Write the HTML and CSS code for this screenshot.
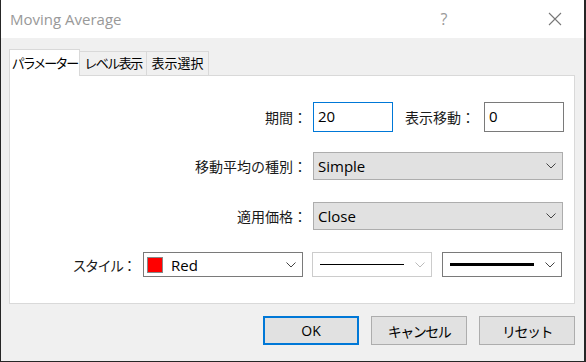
FILE: index.html
```html
<!DOCTYPE html>
<html lang="ja">
<head>
  <meta charset="UTF-8">
  <title>Moving Average</title>
  <link rel="stylesheet" href="styles.css">
</head>
<body>
  <div class="window">
    <div class="titlebar">
      <span class="title">Moving Average</span>
      <span class="help">?</span>
      <svg class="close" width="14" height="14" viewBox="0 0 14 14"><path d="M1 1 L13 13 M13 1 L1 13" stroke="#777" stroke-width="1.1" fill="none"/></svg>
    </div>
    <div class="dialog">
      <div class="tabs">
        <div class="tab active">パラメーター</div>
        <div class="tab">レベル表示</div>
        <div class="tab">表示選択</div>
      </div>
      <div class="panel">
        <div class="row row-period">
          <label class="lbl">期間：</label>
          <div class="input focus">20</div>
          <label class="lbl-shift">表示移動：</label>
          <div class="input">0</div>
        </div>
        <div class="row">
          <label class="lbl">移動平均の種別：</label>
          <div class="combo">
            <span>Simple</span>
            <svg class="chev" width="10" height="6" viewBox="0 0 10 6"><polyline points="0.5,0.5 5,5 9.5,0.5" stroke="#444" fill="none"/></svg>
          </div>
        </div>
        <div class="row">
          <label class="lbl">適用価格：</label>
          <div class="combo">
            <span>Close</span>
            <svg class="chev" width="10" height="6" viewBox="0 0 10 6"><polyline points="0.5,0.5 5,5 9.5,0.5" stroke="#444" fill="none"/></svg>
          </div>
        </div>
        <div class="row row-style">
          <label class="lbl lbl-style">スタイル：</label>
          <div class="drop color-drop">
            <span class="swatch"></span>
            <span>Red</span>
            <svg class="chev" width="10" height="6" viewBox="0 0 10 6"><polyline points="0.5,0.5 5,5 9.5,0.5" stroke="#444" fill="none"/></svg>
          </div>
          <div class="drop line-drop disabled">
            <span class="line thin"></span>
            <svg class="chev" width="10" height="6" viewBox="0 0 10 6"><polyline points="0.5,0.5 5,5 9.5,0.5" stroke="#bbb" fill="none"/></svg>
          </div>
          <div class="drop line-drop">
            <span class="line thick"></span>
            <svg class="chev" width="10" height="6" viewBox="0 0 10 6"><polyline points="0.5,0.5 5,5 9.5,0.5" stroke="#444" fill="none"/></svg>
          </div>
        </div>
      </div>
      <div class="buttons">
        <button class="btn default">OK</button>
        <button class="btn kana">キャンセル</button>
        <button class="btn kana">リセット</button>
      </div>
    </div>
  </div>
</body>
</html>
```

FILE: styles.css
```css
body { margin: 0; background: #262626; font-family: "Open Sans", "Noto Sans CJK JP", sans-serif; font-size: 14px; color: #000; }
.window { width: 583px; height: 361px; margin-left: 1px; background: #f0f0f0; display: flex; flex-direction: column; }

.titlebar { height: 38px; background: #fff; display: flex; align-items: center; padding-left: 9px; }
.title { color: #999; font-size: 15px; flex: 1; }
.help { color: #999; font-size: 16px; width: 20px; text-align: center; margin-right: 94px; }
.close { margin-right: 22px; }

.dialog { flex: 1; padding: 11px 9px 0 8px; }
.tabs { display: flex; align-items: flex-end; height: 26px; }
.tab {
  height: 24px; line-height: 23px; padding: 0; box-sizing: border-box; text-align: center;
  border: 1px solid #d9d9d9; border-bottom: none; background: #f0f0f0;
  margin-left: -1px; white-space: nowrap; font-size: 13px;
}
.tab:first-child { margin-left: 0; }
.tab.active { height: 27px; line-height: 26px; background: #fff; position: relative; z-index: 1; margin-bottom: -1px; width: 71px; letter-spacing: -2px; }
.tab:nth-child(2) { width: 68px; letter-spacing: -1.5px; }
.tab:nth-child(3) { width: 63px; }
.kana { letter-spacing: -1.5px; }

.panel { height: 229px; box-sizing: border-box; border: 1px solid #d9d9d9; background: #fff; padding-top: 26px; }
.row { display: flex; align-items: center; height: 30px; margin-bottom: 20px; }
.row:nth-child(2), .row:nth-child(3) { height: 28px; margin-bottom: 22px; }
.row-style { height: 25px; }
.lbl { width: 297px; text-align: right; margin-right: 6px; color: #1a1a1a; }
.lbl-style { width: 125px; margin-right: 8px; letter-spacing: -1.5px; }
.lbl-shift { width: 76px; margin-left: 12px; margin-right: 3px; color: #1a1a1a; }

.input { width: 80px; height: 30px; box-sizing: border-box; border: 1px solid #7a7a7a; padding: 0 4px; line-height: 27px; font-size: 15px; }
.input.focus { border-color: #0078d7; }

.combo {
  width: 250px; height: 28px; box-sizing: border-box; border: 1px solid #adadad; background: #e1e1e1;
  display: flex; align-items: center; padding: 0 6px 0 4px; font-size: 15px;
}
.combo span { flex: 1; }

.drop { height: 25px; box-sizing: border-box; border: 1px solid #7a7a7a; background: #fff; display: flex; align-items: center; padding: 0 6px 0 3px; font-size: 15px; }
.color-drop { width: 160px; margin-right: 9px; }
.color-drop span:nth-child(2) { flex: 1; }
.swatch { width: 16px; height: 16px; box-sizing: border-box; background: #ff0000; border: 1px solid #888; margin-right: 8px; }
.line-drop { width: 120px; margin-right: 10px; padding-left: 7px; }
.line-drop.disabled { border-color: #ccc; }
.line { width: 84px; background: #000; margin-right: auto; }
.line.thin { height: 1px; }
.line.thick { height: 3px; }

.buttons { display: flex; justify-content: flex-end; gap: 12px; padding-top: 12px; }
.btn {
  width: 96px; height: 29px; box-sizing: border-box; border: 1px solid #adadad; background: #e1e1e1;
  font-family: "Open Sans", "Noto Sans CJK JP", sans-serif; font-size: 14px; color: #000; padding: 0;
}
.btn.default { border: 2px solid #0078d7; }
```
